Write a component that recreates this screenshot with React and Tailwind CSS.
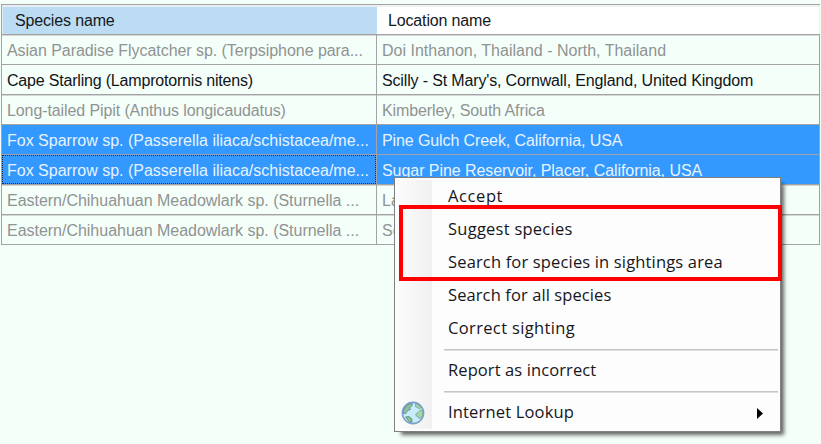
import React from 'react';

const rows = [
    { species: 'Asian Paradise Flycatcher sp. (Terpsiphone para...', location: 'Doi Inthanon, Thailand - North, Thailand', st: 'tracking-[-0.05px]', lt: 'tracking-[0px]' },
    { species: 'Cape Starling (Lamprotornis nitens)', location: "Scilly - St Mary's, Cornwall, England, United Kingdom", st: 'tracking-[-0.19px]', lt: 'tracking-[-0.15px]', state: 'active' },
    { species: 'Long-tailed Pipit (Anthus longicaudatus)', location: 'Kimberley, South Africa', st: 'tracking-[-0.1px]', lt: 'tracking-[-0.1px]' },
    { species: 'Fox Sparrow sp. (Passerella iliaca/schistacea/me...', location: 'Pine Gulch Creek, California, USA', st: 'tracking-[0px]', lt: 'tracking-[-0.1px]', state: 'selected' },
    { species: 'Fox Sparrow sp. (Passerella iliaca/schistacea/me...', location: 'Sugar Pine Reservoir, Placer, California, USA', st: 'tracking-[0px]', lt: 'tracking-[-0.06px]', state: 'selected', focused: true },
    { species: 'Eastern/Chihuahuan Meadowlark sp. (Sturnella ...', location: 'La', st: 'tracking-[-0.02px]', lt: 'tracking-[0px]' },
    { species: 'Eastern/Chihuahuan Meadowlark sp. (Sturnella ...', location: 'Se', st: 'tracking-[-0.02px]', lt: 'tracking-[0px]' },
];

const stateClasses = {
    active: 'text-[#101418]',
    selected: 'bg-[#3399ff] text-[#e8f3ff]',
};

const menuItems = [
    { label: 'Accept', tracking: 'tracking-[0.6px]' },
    { label: 'Suggest species', tracking: 'tracking-[0.25px]' },
    { label: 'Search for species in sightings area', tracking: 'tracking-[0.16px]' },
    { label: 'Search for all species', tracking: 'tracking-[0.1px]' },
    { label: 'Correct sighting', tracking: 'tracking-[0.36px]' },
    { separator: true },
    { label: 'Report as incorrect', tracking: 'tracking-[0.1px]' },
    { separator: true },
    { label: 'Internet Lookup', tracking: 'tracking-[0.17px]', icon: true, submenu: true },
];

const Globe = () => (
    <svg width="24" height="24" viewBox="0 0 24 24">
        <circle cx="12" cy="12" r="10.6" fill="#c9ecfb" stroke="#7ba0cc" strokeWidth="1.6" />
        <path d="M2.5 9 L5 5 L9 2.5 L11.5 3 L10.5 5.5 L8.5 6.5 L9.5 8.5 L6.5 9.5 L5 12.5 L2.5 12.5Z" fill="#8fc09a" stroke="#5b9498" strokeWidth=".9" />
        <path d="M14.5 2.5 L18.5 4.5 L20 7 L17.5 7.5 L14.5 5.5Z" fill="#a4cfa4" stroke="#6ba09a" strokeWidth=".7" />
        <path d="M20 8.5 L22 11 L21.8 14.5 L19 17.5 L17 16.5 L14.5 13.5 L17 11.5Z" fill="#a9d3a8" stroke="#6ba09a" strokeWidth=".9" />
        <path d="M4.5 16 L8 15.5 L11 18 L11 21 L8.5 21Z" fill="#8fc08d" stroke="#5b9488" strokeWidth=".9" />
    </svg>
);

const Row = ({ row }) => (
    <div className={`grid h-[30px] grid-cols-[375px_443px] border-b border-[#a3a3a3] ${stateClasses[row.state] || 'text-[#8f9392] shadow-[inset_0_1px_0_#d3d7d5]'}`}>
        <div className={`relative h-[29px] overflow-hidden border-r border-[#a3a3a3] pl-[5px] leading-[31px] whitespace-nowrap ${row.st}`}>
            {row.species}
            {row.focused && <div className="absolute inset-0 border border-dotted border-[#1c2a38]" />}
        </div>
        <div className={`h-[29px] overflow-hidden border-r border-[#a3a3a3] pl-[5px] leading-[31px] whitespace-nowrap ${row.lt}`}>
            {row.location}
        </div>
    </div>
);

const ContextMenu = () => (
    <div className="absolute top-[177px] left-[394px] h-[255px] w-[387px] border border-[#808080] bg-[#fdfdfd] pt-[2px] font-['Open_Sans',sans-serif] text-[16.5px] text-[#16161c] shadow-[5px_5px_4px_-2px_rgba(0,0,0,0.6)]">
        <div className="absolute top-[2px] bottom-[2px] left-[2px] w-[35px] bg-linear-to-r from-[#fcfcfc] to-[#f0f0f0]" />
        <div className="relative">
            {menuItems.map((item, index) => item.separator ? (
                <div key={index} className="flex h-[9px] items-center pr-[2px] pl-[49px]">
                    <div className="h-[2px] w-full border-b border-[#dedede] bg-[#c6c6c6]" />
                </div>
            ) : (
                <div key={index} className="flex h-[33px] items-center">
                    <div className="flex w-[53px] pl-[6px]">{item.icon && <Globe />}</div>
                    <span className={`whitespace-nowrap ${item.tracking}`}>{item.label}</span>
                    {item.submenu && (
                        <svg className="mt-px mr-[17px] ml-auto" width="6" height="11" viewBox="0 0 6 11">
                            <path d="M0 0 L6 5.5 L0 11Z" fill="#000" />
                        </svg>
                    )}
                </div>
            ))}
        </div>
    </div>
);

const App = () => (
    <div className="relative h-[444px] w-[821px] overflow-hidden bg-[#f5fffa] pt-[4px] pl-px font-['Liberation_Sans',Arial,sans-serif] text-[16px]">
        <div className="w-[819px] border-t border-l border-[#a3a3a3]">
            <div className="grid h-[30px] grid-cols-[375px_443px] border-b border-[#a3a3a3] bg-white tracking-[-0.15px] text-[#14181c]">
                <div className="border-t-2 border-l border-[#e6eef4] bg-[#bbdcf3] pl-[12px] leading-[27px]">Species name</div>
                <div className="border-t-2 border-r border-[#eef2f0] pl-[11px] leading-[27px]">Location name</div>
            </div>
            {rows.map((row, index) => <Row key={index} row={row} />)}
        </div>
        <ContextMenu />
        <div className="absolute top-[205px] left-[399px] h-[76px] w-[383px] border-4 border-[#ff0000]" />
    </div>
);

export default App;
